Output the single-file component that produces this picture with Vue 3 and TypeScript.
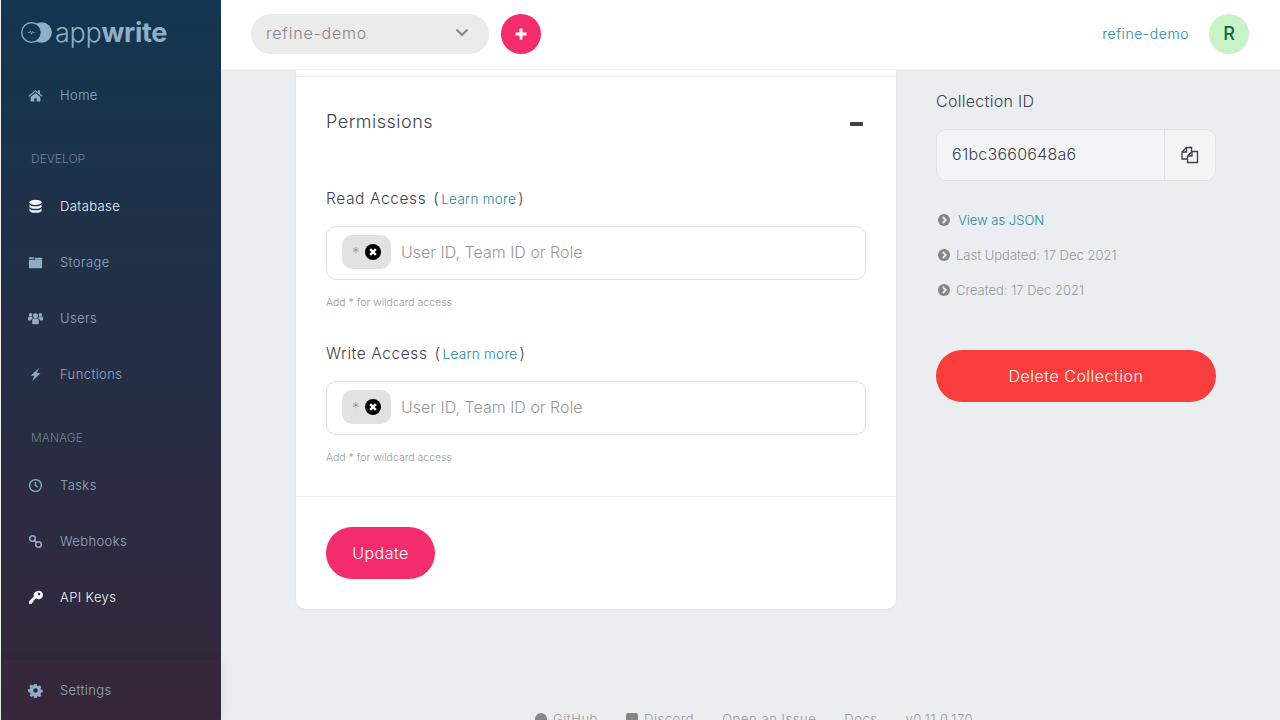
<template>
  <div class="app">
    <aside class="sidebar">
      <div class="logo">
        <svg class="logo-mark" width="31" height="21" viewBox="0 0 31 21">
          <circle cx="20.500" cy="10.500" r="10.300" fill="#8fb0c7" />
          <circle cx="10.500" cy="10.500" r="9.800" fill="#173751" stroke="#8fb0c7" stroke-width="1.300" />
          <path d="M7 10.500h1.600l.8-1.500 1.200 3.200.9-2.700.6 1h1.600" fill="none" stroke="#8fb0c7" stroke-width=".7" />
        </svg>
        <span class="logo-text">app<b>write</b></span>
      </div>

      <nav class="nav">
        <template v-for="group in groups" :key="group.title">
          <div v-if="group.title" class="nav-title">{{ group.title }}</div>
          <a v-for="item in group.items" :key="item.label" class="nav-item" :class="{ active: item.active }">
            <svg class="nav-icon" viewBox="0 0 16 16" fill="currentColor" v-html="item.icon"></svg>
            <span>{{ item.label }}</span>
          </a>
        </template>
      </nav>

      <div class="side-footer">
        <a class="nav-item">
          <svg class="nav-icon" viewBox="0 0 16 16" fill="currentColor" v-html="cogIcon"></svg>
          <span>Settings</span>
        </a>
      </div>
    </aside>

    <div class="page">
      <header class="topbar">
        <div class="project-select">
          <span>refine-demo</span>
          <svg width="14" height="9" viewBox="0 0 14 9"><path d="M1.500 1.500 7 7l5.500-5.500" fill="none" stroke="#868686" stroke-width="2" /></svg>
        </div>
        <button class="add-btn">
          <svg width="12" height="12" viewBox="0 0 12 12"><path d="M6 .5v11M.5 6h11" stroke="#fff" stroke-width="3" /></svg>
        </button>
        <a class="user-name">refine-demo</a>
        <div class="avatar">R</div>
      </header>

      <main class="content">
        <section class="card">
          <div class="card-top"></div>
          <div class="permissions">
            <div class="perm-head">
              <h2>Permissions</h2>
              <span class="minus"></span>
            </div>

            <div v-for="field in accessFields" :key="field" class="field">
              <label>{{ field }} Access <span class="paren">(<a>Learn more</a>)</span></label>
              <div class="tags-input">
                <span class="tag">
                  <span class="star">*</span>
                  <svg width="16" height="16" viewBox="0 0 16 16">
                    <circle cx="8" cy="8" r="8" fill="#000" />
                    <path d="M5.200 5.200l5.600 5.600M10.800 5.200l-5.600 5.600" stroke="#fff" stroke-width="2.400" />
                  </svg>
                </span>
                <span class="placeholder">User ID, Team ID or Role</span>
              </div>
              <p class="hint">Add * for wildcard access</p>
            </div>
          </div>
          <div class="card-foot">
            <button class="update-btn">Update</button>
          </div>
        </section>

        <aside class="side">
          <div class="side-label">Collection ID</div>
          <div class="copy-box">
            <span class="copy-value">61bc3660648a6</span>
            <span class="copy-btn">
              <svg width="18" height="18" viewBox="0 0 18 18" fill="none" stroke="#40404c" stroke-width="1.300">
                <path d="M10.500 5V1.500H5.500L1 6v7h5.500" />
                <path d="M5.500 1.500V6H1" />
                <path d="M11 5.500h5.500v11h-10V10z" />
                <path d="M11 5.500V10H6.500" />
              </svg>
            </span>
          </div>
          <ul class="meta">
            <li v-for="row in metaRows" :key="row.text" :class="{ link: row.link }">
              <svg width="12" height="12" viewBox="0 0 12 12">
                <circle cx="6" cy="6" r="6" fill="#868686" />
                <path d="M4.800 3l3 3-3 3" fill="none" stroke="#eaeef1" stroke-width="1.800" />
              </svg>
              <span>{{ row.text }}</span>
            </li>
          </ul>
          <button class="delete-btn">Delete Collection</button>
        </aside>

        <footer class="page-footer">
          <span class="foot-item"><i class="foot-dot"></i>GitHub</span>
          <span class="foot-item"><i class="foot-square"></i>Discord</span>
          <span>Open an Issue</span>
          <span>Docs</span>
          <span>v0.11.0.170</span>
        </footer>
      </main>
    </div>
  </div>
</template>

<script setup lang="ts">
interface NavItem {
  label: string
  icon: string
  active?: boolean
}

const cogIcon =
  '<path fill-rule="evenodd" d="M6.700 1h2.600l.4 1.900 1.200.5 1.600-1 1.800 1.800-1 1.600.5 1.200 1.900.4v2.600l-1.900.4-.5 1.200 1 1.600-1.800 1.800-1.600-1-1.200.5-.4 1.900H6.700l-.4-1.900-1.200-.5-1.600 1-1.800-1.800 1-1.600-.5-1.200L0 9.300V6.700l1.900-.4.5-1.200-1-1.600 1.800-1.800 1.600 1 1.200-.5zM8 5.600a2.400 2.400 0 1 0 0 4.800 2.400 2.400 0 0 0 0-4.800z"/>'

const groups: { title: string; items: NavItem[] }[] = [
  {
    title: '',
    items: [
      {
        label: 'Home',
        icon: '<path d="M8 2 .5 8.300l.8.9L8 3.700l6.700 5.500.8-.9-2.700-2.300V2.500h-2v2zM2.800 9.500V14.500h3.900v-3.500h2.600v3.500h3.900V9.500L8 5.200z"/>'
      }
    ]
  },
  {
    title: 'DEVELOP',
    items: [
      {
        label: 'Database',
        active: true,
        icon: '<ellipse cx="8" cy="3.500" rx="6.500" ry="2.800"/><path d="M1.500 5.800v2.200c0 1.400 2.900 2.500 6.500 2.500s6.500-1.100 6.500-2.500V5.800c-1 1.300-3.700 2-6.500 2s-5.500-.7-6.500-2zM1.500 10v2.200c0 1.400 2.900 2.500 6.500 2.500s6.500-1.100 6.500-2.500V10c-1 1.300-3.700 2-6.500 2s-5.500-.7-6.500-2z"/>'
      },
      {
        label: 'Storage',
        icon: '<path d="M1 2.500h5l1.200 1.500H1zM1 5h14v8a1 1 0 0 1-1 1H2a1 1 0 0 1-1-1z"/><path d="M7 3h7.500a.5.5 0 0 1 .5.5V5H8z"/>'
      },
      {
        label: 'Users',
        icon: '<circle cx="8" cy="5" r="2.700"/><circle cx="2.800" cy="4" r="1.900"/><circle cx="13.200" cy="4" r="1.900"/><path d="M4.500 9.800a2 2 0 0 1 2-1.800h3a2 2 0 0 1 2 1.800V13a1 1 0 0 1-1 1h-5a1 1 0 0 1-1-1zM0 7.200a1.500 1.500 0 0 1 1.500-1.300h2.600c.3.900.7 1.400 1.300 1.800-1.300.4-2 1.400-2.100 2.500H1a1 1 0 0 1-1-1zM16 7.200a1.500 1.500 0 0 0-1.500-1.300h-2.600c-.3.900-.7 1.400-1.300 1.800 1.300.4 2 1.400 2.100 2.500H15a1 1 0 0 0 1-1z"/>'
      },
      {
        label: 'Functions',
        icon: '<path d="M11.800 1 2.800 9.300h4.100L4.500 15 13.500 6.700H9.200z"/>'
      }
    ]
  },
  {
    title: 'MANAGE',
    items: [
      {
        label: 'Tasks',
        icon: '<path fill-rule="evenodd" d="M8 1a7 7 0 1 0 0 14A7 7 0 0 0 8 1zm0 1.400a5.600 5.600 0 1 1 0 11.200A5.600 5.600 0 0 1 8 2.400z"/><path d="M7.300 4.200h1.300v3.500l2.400 1.300-.6 1.100-3.100-1.700z"/>'
      },
      {
        label: 'Webhooks',
        icon: '<g fill="none" stroke="currentColor" stroke-width="1.700"><circle cx="4.800" cy="4.800" r="3"/><circle cx="11.200" cy="11.200" r="3"/><path d="M6.800 6.800l2.400 2.400"/></g>'
      },
      {
        label: 'API Keys',
        active: true,
        icon: '<path fill-rule="evenodd" d="M10.500 1a4.500 4.500 0 0 0-4.300 5.800L1 12v3h3v-1.700h1.600v-1.700l3-2.700A4.500 4.500 0 1 0 10.500 1zm1.300 2a1.300 1.300 0 1 1 0 2.600 1.300 1.300 0 0 1 0-2.600z"/>'
      }
    ]
  }
]

const accessFields = ['Read', 'Write']

const metaRows = [
  { text: 'View as JSON', link: true },
  { text: 'Last Updated: 17 Dec 2021', link: false },
  { text: 'Created: 17 Dec 2021', link: false }
]
</script>

<style>
html,
body {
  margin: 0;
  background: #eaeef1;
}
</style>

<style scoped>
.app {
  display: flex;
  width: 1280px;
  height: 720px;
  overflow: hidden;
  padding-left: 1px;
  box-sizing: border-box;
  font-family: Inter, "Liberation Sans", sans-serif;
  font-weight: 300;
  color: #40404c;
  background: #eaeef1;
}

.sidebar {
  flex: 0 0 220px;
  display: flex;
  flex-direction: column;
  background: linear-gradient(to bottom, #143650, #35273a);
}

.logo {
  height: 67px;
  display: flex;
  align-items: center;
  gap: 3px;
  padding: 0 0 3px 20px;
  color: #8fb0c7;
  box-sizing: border-box;
}

.logo-text {
  font-size: 27px;
  font-weight: 300;
  letter-spacing: -.3px;
}

.logo-text b {
  font-weight: 700;
}

.nav-title {
  height: 55px;
  box-sizing: border-box;
  padding: 26px 0 9px 30px;
  font-size: 12px;
  line-height: 20px;
  color: #6d8396;
}

.nav-item {
  height: 56px;
  display: flex;
  align-items: center;
  padding-left: 27px;
  font-size: 13px;
  font-weight: 300;
  letter-spacing: .4px;
  color: #8fadc4;
}

.nav-item.active {
  color: #f2f4f6;
}

.nav-icon {
  width: 15px;
  height: 15px;
  margin-right: 17px;
  flex: none;
}

.side-footer {
  margin-top: auto;
  height: 60px;
  display: flex;
  align-items: center;
  box-shadow: 0 0 10px rgba(0, 0, 0, .08);
  background: rgba(60, 38, 56, .2);
}

.page {
  flex: 1;
  min-width: 0;
  display: flex;
  flex-direction: column;
}

.topbar {
  height: 70px;
  flex: none;
  box-sizing: border-box;
  display: flex;
  align-items: center;
  padding: 0 31px 2px 30px;
  background: #fff;
  border-bottom: 1px solid #f1f1f1;
  position: relative;
  z-index: 1;
}

.project-select {
  width: 238px;
  height: 40px;
  box-sizing: border-box;
  padding: 0 20px 2px 15px;
  display: flex;
  align-items: center;
  justify-content: space-between;
  border-radius: 20px;
  background: #ebebeb;
  color: #868686;
  font-size: 16px;
  letter-spacing: .8px;
}

.add-btn {
  width: 40px;
  height: 40px;
  margin-left: 12px;
  padding: 0;
  border: 0;
  border-radius: 50%;
  background: #f52c6b;
  display: flex;
  align-items: center;
  justify-content: center;
}

.user-name {
  margin-left: auto;
  font-size: 14px;
  letter-spacing: .55px;
  color: #1d89a3;
}

.avatar {
  width: 40px;
  height: 40px;
  margin-left: 20px;
  border-radius: 50%;
  background: #c8f3c8;
  color: #0f6a32;
  font-size: 18px;
  font-weight: 500;
  display: flex;
  align-items: center;
  justify-content: center;
}

.content {
  flex: 1;
  min-height: 0;
  display: grid;
  grid-template-columns: 600px 280px;
  grid-template-rows: 539px auto;
  column-gap: 40px;
  padding-left: 75px;
}

.card {
  background: #fff;
  border-radius: 0 0 10px 10px;
  box-shadow: 0 1px 3px rgba(0, 0, 0, .05);
}

.card-top {
  height: 6px;
  border-bottom: 1px solid #eaeef1;
}

.permissions {
  padding: 30px 30px 0;
  height: 420px;
  box-sizing: border-box;
  border-bottom: 1px solid #eaeef1;
}

.perm-head {
  display: flex;
  align-items: center;
  justify-content: space-between;
  height: 28px;
  margin-bottom: 53px;
}

.perm-head h2 {
  margin: 0;
  font-size: 18px;
  font-weight: 300;
  letter-spacing: .5px;
}

.minus {
  width: 13px;
  height: 4px;
  margin: 6px 3px 0 0;
  border-radius: 1px;
  background: #40404c;
}

.field {
  height: 155px;
}

.field label {
  display: block;
  height: 38px;
  line-height: 22px;
  font-size: 15.500px;
  letter-spacing: .6px;
}

.paren {
  margin-left: 2px;
}

.paren a {
  margin: 0 2px;
  font-size: 13.500px;
  letter-spacing: .3px;
  color: #1d89a3;
}

.tags-input {
  height: 54px;
  box-sizing: border-box;
  padding: 0 15px 2px;
  display: flex;
  align-items: center;
  gap: 10px;
  border: 1px solid #e0e0e0;
  border-radius: 10px;
}

.tag {
  width: 49px;
  height: 34px;
  box-sizing: border-box;
  padding: 0 10px;
  display: flex;
  align-items: center;
  justify-content: space-between;
  border-radius: 10px;
  background: #e2e2e2;
  color: #9a9a9a;
  font-size: 15px;
}

.placeholder {
  font-size: 16px;
  color: #989898;
}

.hint {
  margin: 16px 0 0;
  font-size: 10.500px;
  line-height: 14px;
  color: #989898;
}

.card-foot {
  padding: 30px;
}

.update-btn,
.delete-btn {
  height: 52px;
  border: 0;
  border-radius: 26px;
  color: #fff;
  font-family: inherit;
  font-weight: 300;
  font-size: 16px;
  letter-spacing: .5px;
}

.update-btn {
  width: 109px;
  background: #f52c6b;
}

.side {
  padding-top: 19px;
}

.side-label {
  height: 40px;
  line-height: 24px;
  font-size: 16px;
  letter-spacing: .3px;
}

.copy-box {
  height: 52px;
  box-sizing: border-box;
  display: flex;
  border: 1px solid #e0e3e6;
  border-radius: 10px;
  background: #f2f4f5;
}

.copy-value {
  flex: 1;
  padding-left: 15px;
  line-height: 48px;
  font-size: 16px;
  letter-spacing: .25px;
}

.copy-btn {
  width: 51px;
  box-sizing: border-box;
  border-left: 1px solid #e0e3e6;
  background: #f4f4f5;
  border-radius: 0 10px 10px 0;
  display: flex;
  align-items: center;
  justify-content: center;
}

.meta {
  list-style: none;
  margin: 21px 0 0;
  padding: 0 0 0 2px;
  font-size: 13px;
  color: #989898;
}

.meta li {
  height: 35px;
  display: flex;
  align-items: center;
  gap: 6px;
}

.meta li.link {
  color: #1d89a3;
  gap: 8px;
}

.delete-btn {
  display: block;
  width: 100%;
  margin-top: 43px;
  background: #f93c3c;
}

.page-footer {
  grid-column: 1 / 3;
  padding-top: 102px;
  padding-left: 239px;
  display: flex;
  gap: 28px;
  font-size: 13px;
  letter-spacing: .55px;
  color: #989898;
  line-height: 16px;
}

.foot-item {
  display: flex;
  align-items: center;
  gap: 6px;
}

.foot-dot,
.foot-square {
  width: 12px;
  height: 12px;
  background: #868686;
}

.foot-dot {
  border-radius: 50%;
}

.foot-square {
  border-radius: 2px;
}
</style>
